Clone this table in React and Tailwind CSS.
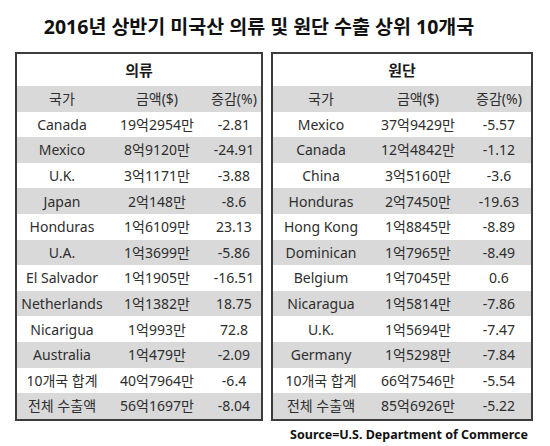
import React from "react";

const left = [
  ["Canada", "19억2954만", "-2.81"],
  ["Mexico", "8억9120만", "-24.91"],
  ["U.K.", "3억1171만", "-3.88"],
  ["Japan", "2억148만", "-8.6"],
  ["Honduras", "1억6109만", "23.13"],
  ["U.A.", "1억3699만", "-5.86"],
  ["El Salvador", "1억1905만", "-16.51"],
  ["Netherlands", "1억1382만", "18.75"],
  ["Nicarigua", "1억993만", "72.8"],
  ["Australia", "1억479만", "-2.09"],
  ["10개국 합계", "40억7964만", "-6.4"],
  ["전체 수출액", "56억1697만", "-8.04"],
];

const right = [
  ["Mexico", "37억9429만", "-5.57"],
  ["Canada", "12억4842만", "-1.12"],
  ["China", "3억5160만", "-3.6"],
  ["Honduras", "2억7450만", "-19.63"],
  ["Hong Kong", "1억8845만", "-8.89"],
  ["Dominican", "1억7965만", "-8.49"],
  ["Belgium", "1억7045만", "0.6"],
  ["Nicaragua", "1억5814만", "-7.86"],
  ["U.K.", "1억5694만", "-7.47"],
  ["Germany", "1억5298만", "-7.84"],
  ["10개국 합계", "66억7546만", "-5.54"],
  ["전체 수출액", "85억6926만", "-5.22"],
];

function Table({ title, rows, outer, c1, c2, c3 }) {
  const all = [["국가", "금액($)", "증감(%)"], ...rows];
  return (
    <div className={`${outer} border-2 border-[#3c3c3c] bg-white`}>
      <div className="h-[32px] flex items-center justify-center text-[15px] font-bold text-[#1a1a1a]">
        {title}
      </div>
      {all.map((r, i) => (
        <div
          key={i}
          className={`flex h-[25.6px] items-center text-[14px] text-[#2e2e2e] ${
            i % 2 === 0 ? "bg-[#d9d9d9]" : "bg-white"
          }`}
        >
          <div className={`${c1} text-center whitespace-nowrap`}>{r[0]}</div>
          <div className={`${c2} text-center whitespace-nowrap`}>{r[1]}</div>
          <div className={`${c3} text-center whitespace-nowrap`}>{r[2]}</div>
        </div>
      ))}
    </div>
  );
}

export default function App() {
  return (
    <div
      className="w-[550px] h-[446px] bg-white overflow-hidden"
      style={{ fontFamily: '"Noto Sans", "Noto Sans CJK KR", sans-serif' }}
    >
      <div className="h-[52px] pt-[15px] flex justify-center pr-[32px]">
        <div className="text-[19.5px] leading-[24px] font-bold text-[#111]">
          2016년 상반기 미국산 의류 및 원단 수출 상위 10개국
        </div>
      </div>
      <div className="flex pl-[15px] gap-[8px]">
        <Table
          title="의류"
          rows={left}
          outer="w-[248px]"
          c1="w-[90px]"
          c2="w-[100px]"
          c3="w-[54px]"
        />
        <Table
          title="원단"
          rows={right}
          outer="w-[262px]"
          c1="w-[96px]"
          c2="w-[98px]"
          c3="w-[64px]"
        />
      </div>
      <div className="flex justify-end pr-[22px] mt-[6px]">
        <div className="text-[12.5px] leading-[16px] font-bold text-[#111]">
          Source=U.S. Department of Commerce
        </div>
      </div>
    </div>
  );
}
